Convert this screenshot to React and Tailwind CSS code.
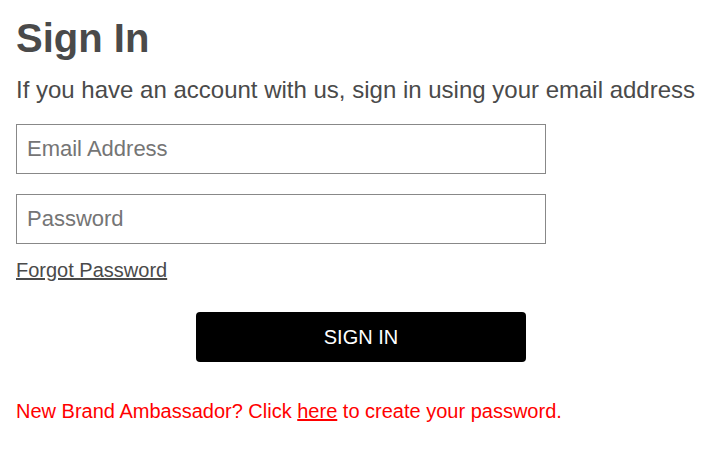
export default function App() {
  return (
    <div className="bg-white min-h-screen pl-4 pr-px pt-[15px] font-['Liberation_Sans',Arial,sans-serif] text-[#4a4a4a]">
      <h1 className="text-[40px] font-bold leading-[46px]">Sign In</h1>
      <p className="mt-[15px] text-[24px] leading-[28px]">
        If you have an account with us, sign in using your email address
      </p>
      <form className="mt-[20px]" onSubmit={(e) => e.preventDefault()}>
        <input
          type="email"
          placeholder="Email Address"
          className="block w-[530px] h-[50px] border border-[#888] px-[10px] text-[22px] text-[#4a4a4a] placeholder:text-[#757575] outline-none"
        />
        <input
          type="password"
          placeholder="Password"
          className="block mt-5 w-[530px] h-[50px] border border-[#888] px-[10px] text-[22px] text-[#4a4a4a] placeholder:text-[#757575] outline-none"
        />
        <a href="#" className="inline-block mt-[13px] text-[20px] leading-[26px] underline text-[#4a4a4a]">
          Forgot Password
        </a>
        <div className="flex justify-center mt-[28px]">
          <button
            type="submit"
            className="w-[330px] h-[50px] bg-black text-white text-[20px] rounded-[4px]"
          >
            SIGN IN
          </button>
        </div>
      </form>
      <p className="mt-[36px] text-[20px] leading-[26px] text-[#ff0000]">
        New Brand Ambassador? Click <a href="#" className="underline">here</a> to create your password.
      </p>
    </div>
  );
}
